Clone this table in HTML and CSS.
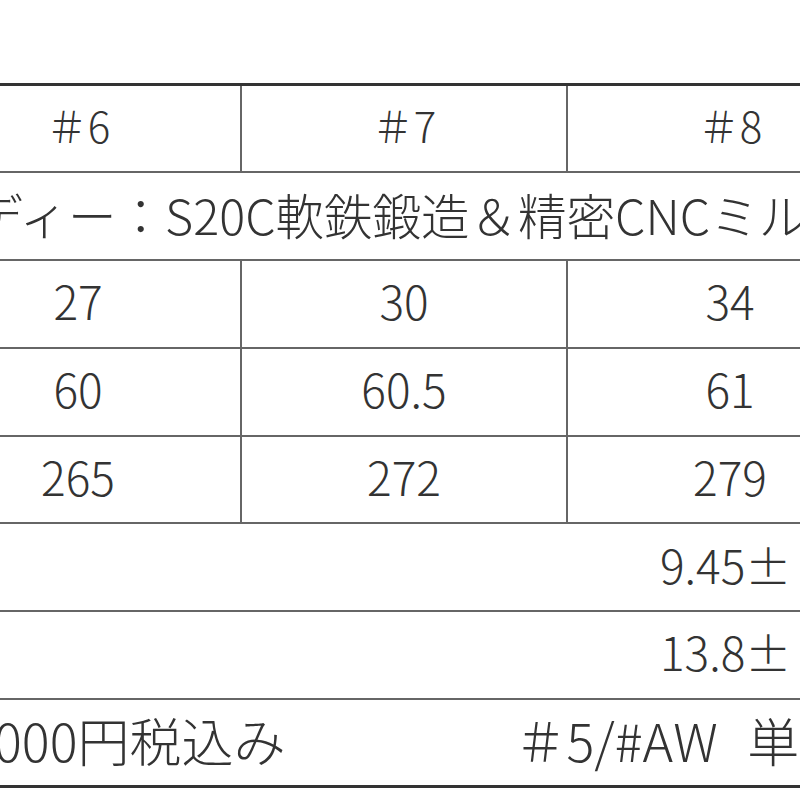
FILE: index.html
```html
<!DOCTYPE html>
<html lang="ja">
<head>
<meta charset="utf-8">
<title>スペック表</title>
<link rel="stylesheet" href="styles.css">
</head>
<body>
<div class="sheet">
  <table class="spec">
    <colgroup>
      <col class="col"><col class="col"><col class="col">
    </colgroup>
    <tr class="head">
      <td>＃6</td><td>＃7</td><td>＃8</td>
    </tr>
    <tr class="desc">
      <td colspan="3"><span class="desc-text">ボディー：S20C軟鉄鍛造＆精密CNCミル</span></td>
    </tr>
    <tr class="num"><td>27</td><td>30</td><td>34</td></tr>
    <tr class="num"><td>60</td><td>60.5</td><td>61</td></tr>
    <tr class="num"><td>265</td><td>272</td><td>279</td></tr>
    <tr class="num span"><td colspan="3"><span class="right-text">9.45±</span></td></tr>
    <tr class="num span"><td colspan="3"><span class="right-text">13.8±</span></td></tr>
    <tr class="price">
      <td colspan="3"><div class="price-line"><span>000円税込み</span><span class="item">＃5/#AW 単</span></div></td>
    </tr>
  </table>
</div>
</body>
</html>
```

FILE: styles.css
```css
html, body {
  margin: 0;
  padding: 0;
  background: #fff;
}
body {
  width: 800px;
  height: 800px;
  overflow: hidden;
  font-family: "Noto Sans CJK JP", "Noto Sans", sans-serif;
  font-weight: 300;
  color: #333;
}
.sheet {
  padding-top: 83px;
  margin-left: -86px;
}
.spec {
  border-collapse: collapse;
  table-layout: fixed;
  width: 978px;
  border-top: 3px solid #333;
  border-bottom: 3px solid #333;
}
.col { width: 326px; }
.spec tr { height: 87.75px; }
.spec td {
  border: 2px solid #666;
  text-align: center;
  padding: 0 0 7px 0;
  white-space: nowrap;
  font-size: 46px;
  line-height: 1;
}
.spec tr.head td { font-size: 42px; }
.spec tr.desc td {
  text-align: left;
  padding-left: 10px;
  padding-bottom: 4px;
  font-size: 48.5px;
}
.spec tr.span td {
  text-align: left;
  padding-left: 744px;
}
.spec tr.price td {
  text-align: left;
  font-size: 52px;
  padding-left: 78px;
  padding-bottom: 5px;
}
.price-line {
  display: flex;
  gap: 229px;
}
.item { word-spacing: 18px; }
```
